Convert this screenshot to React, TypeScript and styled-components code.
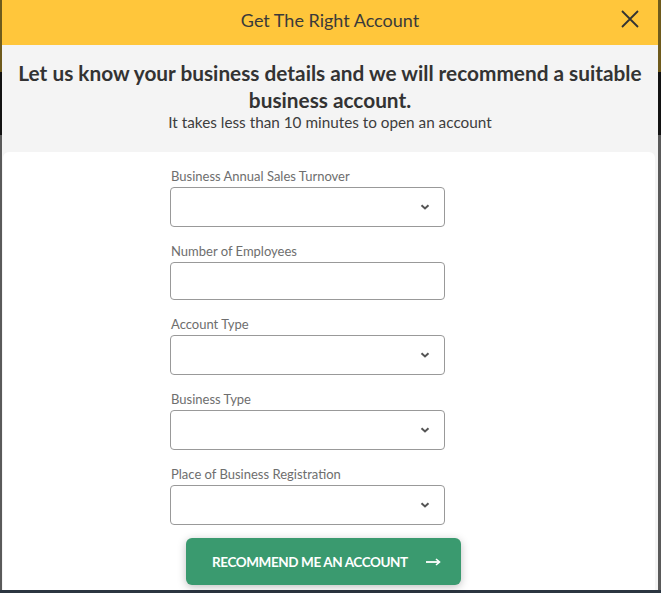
import React from "react";
import styled, { createGlobalStyle } from "styled-components";

const Global = createGlobalStyle`
  html, body { margin: 0; padding: 0; }
  body { font-family: Lato, "Open Sans", sans-serif; background: #2b3540; }
  * { box-sizing: border-box; }
`;

const Backdrop = styled.div`
  width: 661px;
  height: 593px;
  overflow: hidden;
  background: linear-gradient(
    to bottom,
    #6e5a1c 0px,
    #6e5a1c 72px,
    #121212 72px,
    #121212 135px,
    #5a5a5a 135px,
    #5a5a5a 590px,
    #2b3540 590px
  );
  padding-left: 2px;
`;

const Modal = styled.div`
  width: 656px;
  height: 590px;
  background: #f4f4f4;
  display: flex;
  flex-direction: column;
`;

const Header = styled.div`
  height: 45px;
  background: #ffc63b;
  display: flex;
  align-items: center;
  justify-content: center;
  position: relative;
  padding-bottom: 6px;
`;

const Title = styled.h2`
  margin: 0;
  font-size: 18px;
  font-weight: 400;
  color: #3a3a3a;
  line-height: 20px;
`;

const CloseButton = styled.button`
  position: absolute;
  right: 18px;
  top: 9px;
  width: 20px;
  height: 20px;
  padding: 0;
  border: 0;
  background: transparent;
  cursor: pointer;
  display: flex;
`;

const Intro = styled.div`
  padding: 14px 6px 21px;
  text-align: center;
`;

const Headline = styled.h1`
  margin: 0;
  font-size: 20.8px;
  font-weight: 700;
  line-height: 27px;
  color: #333;
`;

const Subtitle = styled.p`
  margin: 0;
  font-size: 15.3px;
  line-height: 18px;
  color: #3d3d3d;
`;

const Card = styled.div`
  flex: 1;
  background: #fff;
  margin: 0 3px 0 1px;
  border-radius: 6px 6px 0 0;
  padding: 16px 0 0;
  display: flex;
  flex-direction: column;
`;

const Form = styled.form`
  display: flex;
  flex-direction: column;
  width: 275px;
  margin-left: 167px;
`;

const Field = styled.div`
  display: flex;
  flex-direction: column;
  gap: 3px;
  margin-bottom: 16px;
  &:last-of-type { margin-bottom: 0; }
`;

const Label = styled.label`
  font-size: 13px;
  line-height: 16px;
  color: #6e6e6e;
  padding-left: 1px;
`;

const Control = styled.div<{ $h: number }>`
  height: ${(p) => p.$h}px;
  border: 1px solid #999;
  border-radius: 4px;
  background: #fff;
  display: flex;
  align-items: center;
  justify-content: flex-end;
  padding-right: 14px;
`;

const Submit = styled.button`
  margin: 13px 0 0 183px;
  width: 275px;
  height: 47px;
  border: 0;
  border-radius: 6px;
  background: #3a9a6f;
  color: #fff;
  font-family: Lato, sans-serif;
  font-weight: 700;
  font-size: 13.5px;
  letter-spacing: -0.4px;
  display: flex;
  align-items: center;
  padding: 0 0 0 26px;
  gap: 18px;
  box-shadow: 0 2px 8px rgba(0, 0, 0, 0.25);
  cursor: pointer;
`;

const Chevron = () => (
  <svg width="10" height="6" viewBox="0 0 10 6">
    <path d="M1.5 1.2 L5 4.5 L8.5 1.2" fill="none" stroke="#555" strokeWidth="2" />
  </svg>
);

const Arrow = () => (
  <svg width="15" height="8" viewBox="0 0 15 8">
    <path d="M0 4 H13" stroke="#fff" strokeWidth="1.8" />
    <path d="M10 1 L13.5 4 L10 7" fill="none" stroke="#fff" strokeWidth="1.6" />
  </svg>
);

const fields: { label: string; select: boolean; h: number }[] = [
  { label: "Business Annual Sales Turnover", select: true, h: 40 },
  { label: "Number of Employees", select: false, h: 38 },
  { label: "Account Type", select: true, h: 40 },
  { label: "Business Type", select: true, h: 40 },
  { label: "Place of Business Registration", select: true, h: 40 },
];

export default function App() {
  return (
    <>
      <Global />
      <Backdrop>
        <Modal>
          <Header>
            <Title>Get The Right Account</Title>
            <CloseButton aria-label="Close">
              <svg width="20" height="20" viewBox="0 0 20 20">
                <path d="M2 2 L18 18 M18 2 L2 18" stroke="#333" strokeWidth="1.8" />
              </svg>
            </CloseButton>
          </Header>
          <Intro>
            <Headline>
              Let us know your business details and we will recommend a suitable business account.
            </Headline>
            <Subtitle>It takes less than 10 minutes to open an account</Subtitle>
          </Intro>
          <Card>
            <Form onSubmit={(e) => e.preventDefault()}>
              {fields.map((f) => (
                <Field key={f.label}>
                  <Label>{f.label}</Label>
                  <Control $h={f.h}>{f.select && <Chevron />}</Control>
                </Field>
              ))}
            </Form>
            <Submit type="button">
              <span>RECOMMEND ME AN ACCOUNT</span>
              <Arrow />
            </Submit>
          </Card>
        </Modal>
      </Backdrop>
    </>
  );
}
